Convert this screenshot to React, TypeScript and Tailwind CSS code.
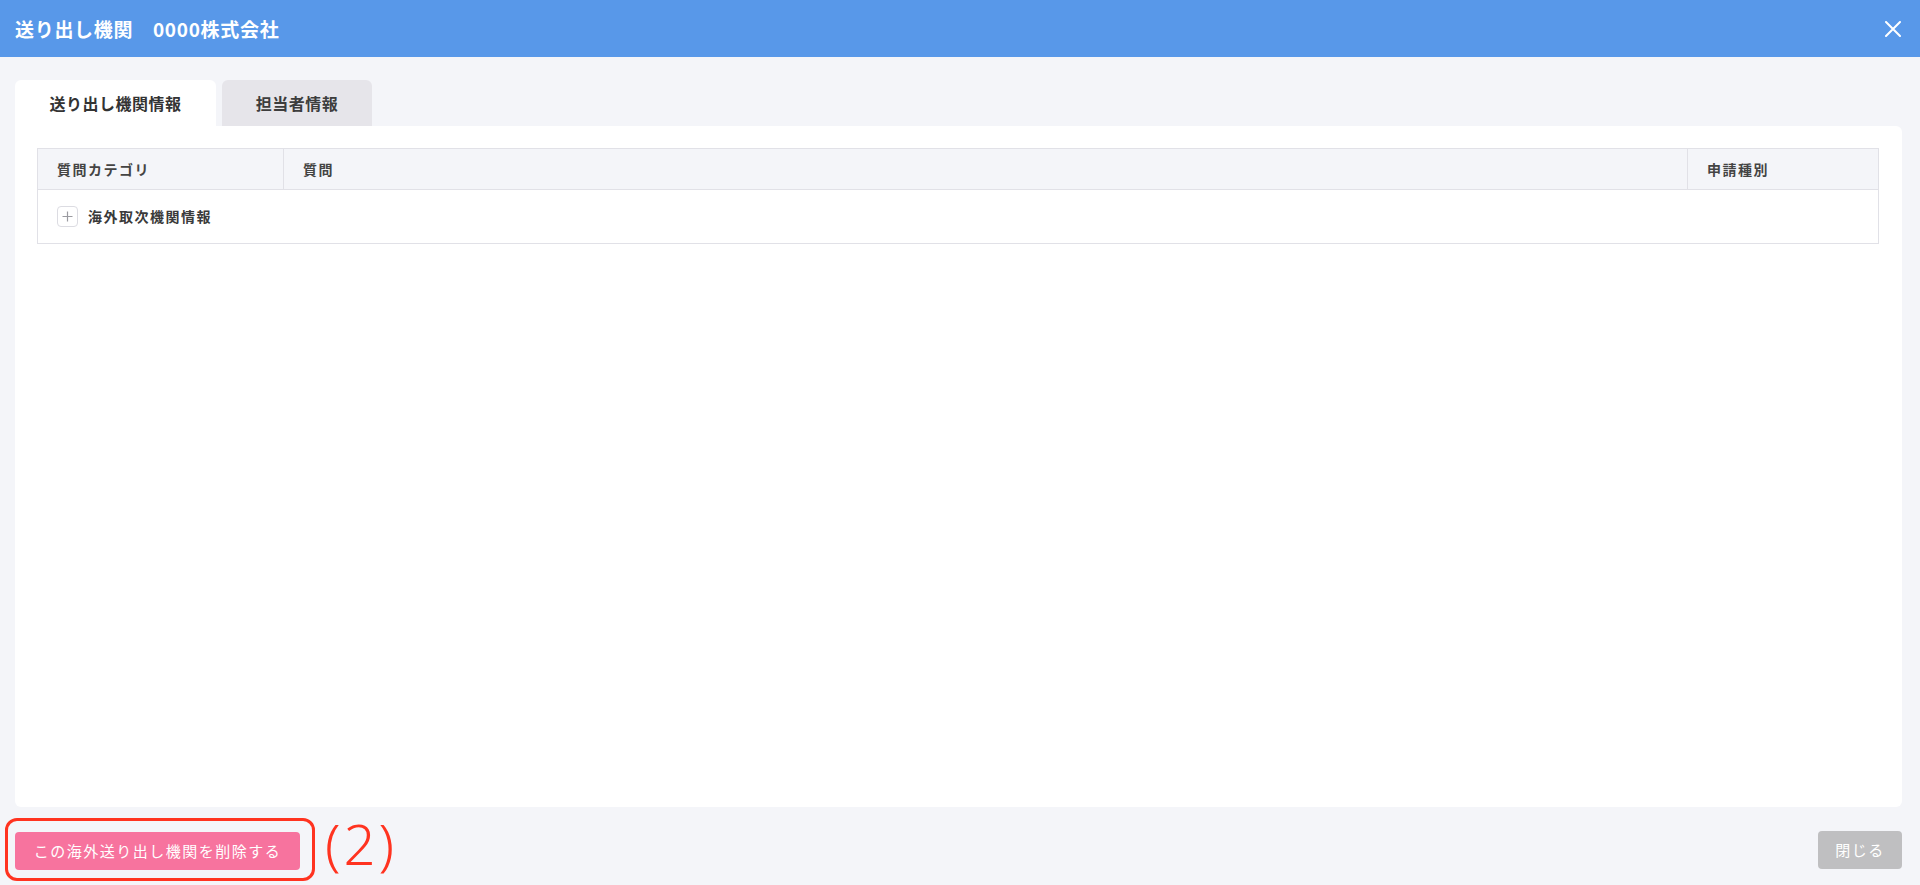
import React from 'react';

const font = { fontFamily: '"Noto Sans CJK JP", "Noto Sans", sans-serif' };

type Row = { id: number; category: string };

const rows: Row[] = [{ id: 1, category: '海外取次機関情報' }];

const PlusBox = () => (
  <span className="w-[21px] h-[21px] rounded-[4px] border border-[#dcdce2] bg-white flex items-center justify-center shrink-0">
    <svg width="11" height="11" viewBox="0 0 11 11" fill="none">
      <path d="M5.5 0.5V10.5M0.5 5.5H10.5" stroke="#9a9aa0" strokeWidth="1.2" />
    </svg>
  </span>
);

export default function App() {
  return (
    <div className="h-[885px] w-full flex flex-col bg-[#f4f5f9] overflow-hidden" style={font}>
      {/* Header */}
      <header className="h-[57px] shrink-0 bg-[#5898e9] flex items-center justify-between pl-[15px] pr-[19px]">
        <h1 className="text-white text-[19px] font-bold tracking-[0.7px] leading-none">
          送り出し機関　0000株式会社
        </h1>
        <button aria-label="閉じる" className="w-[16px] h-[16px] flex items-center justify-center">
          <svg width="16" height="16" viewBox="0 0 16 16" fill="none">
            <path d="M1 1L15 15M15 1L1 15" stroke="white" strokeWidth="2" strokeLinecap="round" />
          </svg>
        </button>
      </header>

      {/* Body */}
      <main className="flex-1 flex flex-col pl-[15px] pr-[18px] pt-[23px] min-h-0">
        {/* Tabs */}
        <div className="flex gap-[6px] h-[46px] shrink-0">
          <div className="w-[201px] bg-white rounded-t-[6px] flex items-center justify-center text-[16px] font-bold tracking-[0.5px] text-[#333]">
            送り出し機関情報
          </div>
          <div className="w-[150px] bg-[#e6e5ea] rounded-t-[6px] flex items-center justify-center text-[16px] font-bold tracking-[0.5px] text-[#3d3d3d]">
            担当者情報
          </div>
        </div>

        {/* Panel */}
        <section className="flex-1 bg-white rounded-b-[6px] rounded-tr-[6px] pt-[22px] pl-[22px] pr-[23px]">
          <div className="border border-[#e1e1e7]">
            <div className="flex h-[41px] bg-[#f4f5f9] border-b border-[#e1e1e7] text-[14px] font-bold tracking-[1.5px] text-[#444]">
              <div className="w-[246px] shrink-0 flex items-center pl-[19px] border-r border-[#e1e1e7]">質問カテゴリ</div>
              <div className="flex-1 flex items-center pl-[19px] border-r border-[#e1e1e7]">質問</div>
              <div className="w-[190px] shrink-0 flex items-center pl-[19px]">申請種別</div>
            </div>
            {rows.map((row) => (
              <div key={row.id} className="flex h-[53px] items-center pl-[19px]">
                <PlusBox />
                <span className="ml-[10px] text-[14px] font-bold tracking-[1.5px] text-[#3a3a3a]">{row.category}</span>
              </div>
            ))}
          </div>
        </section>
      </main>

      {/* Footer */}
      <footer className="h-[78px] shrink-0 flex items-start justify-between pl-[15px] pr-[18px] pt-[24px]">
        <div className="flex items-center">
          <div className="relative">
            <button className="h-[38px] w-[285px] rounded-[4px] bg-[#f7739e] text-white text-[15px] tracking-[1.5px] flex items-center justify-center">
              この海外送り出し機関を削除する
            </button>
            <span className="absolute -left-[10px] -top-[14px] -right-[15px] -bottom-[11px] border-[3px] border-[#ff3320] rounded-[12px] pointer-events-none" />
          </div>
          <span className="ml-[25px] -mt-[16px] text-[#ff3320] text-[56px] font-light tracking-[3px] leading-none" style={{ fontFamily: '"Noto Sans", sans-serif' }}>
            (2)
          </span>
        </div>
        <button className="h-[38px] w-[84px] rounded-[4px] bg-[#bfbfc1] text-white text-[15px] tracking-[1.5px] flex items-center justify-center">
          閉じる
        </button>
      </footer>
    </div>
  );
}
